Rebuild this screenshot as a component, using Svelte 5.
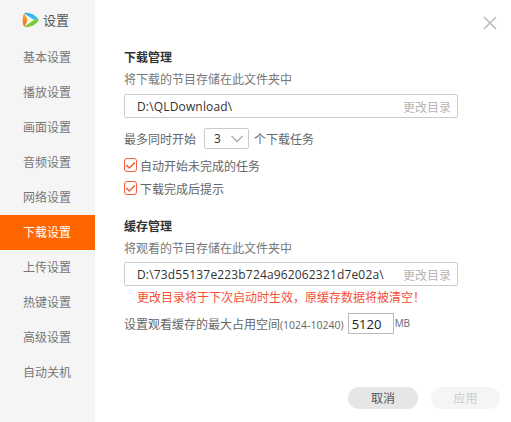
<script>
  const items = ['基本设置','播放设置','画面设置','音频设置','网络设置','下载设置','上传设置','热键设置','高级设置','自动关机'];
</script>

<div class="win">
  <aside class="side">
    <div class="brand">
      <svg class="logo" width="17" height="16" viewBox="0 0 17 16">
        <defs>
          <linearGradient id="lg" x1="0" y1="0" x2="0" y2="1"><stop offset="0" stop-color="#f7b52c"/><stop offset="1" stop-color="#f4651f"/></linearGradient>
          <linearGradient id="lb" x1="0" y1="0" x2="1" y2="0"><stop offset="0" stop-color="#2fa7ee"/><stop offset="1" stop-color="#35c6e8"/></linearGradient>
        </defs>
        <path d="M2.2 1.2 C1 3 .6 5.5.6 8 s.4 5 1.6 6.8 L6 8z" fill="url(#lg)"/>
        <path d="M2.2 1.2 C6 -.3 12 2.5 16 6.3 L12 8 L6 4z" fill="url(#lb)"/>
        <path d="M2.2 14.8 C6 16.3 12 13.5 16 9.7 Q17 8 16 6.3 L12 8 L6 12z" fill="#7ccb3a"/>
        <path d="M5.4 4.6 L12 8 L5.4 11.4z" fill="#f2f8e8"/>
      </svg>
      <span>设置</span>
    </div>
    <nav>
      {#each items as it}
        <div class="item" class:active={it === '下载设置'}>{it}</div>
      {/each}
    </nav>
  </aside>

  <main class="main">
    <button class="close" aria-label="关闭">
      <svg width="14" height="14" viewBox="0 0 14 14"><path d="M1 1 L13 13 M13 1 L1 13" stroke="#b9b9b9" stroke-width="1.5" fill="none"/></svg>
    </button>

    <section class="sec first">
      <h3>下载管理</h3>
      <p class="desc">将下载的节目存储在此文件夹中</p>
      <div class="path"><span class="val">D:\QLDownload\</span><span class="chg">更改目录</span></div>
      <div class="row rowsel">
        <span>最多同时开始</span>
        <div class="sel"><span class="num">3</span>
          <svg width="14" height="8" viewBox="0 0 14 8"><path d="M1.5 1 L7 6.5 L12.5 1" stroke="#b5b5b5" stroke-width="1.7" fill="none"/></svg>
        </div>
        <span>个下载任务</span>
      </div>
      <label class="chk c1"><span class="box"><svg width="11" height="9" viewBox="0 0 11 9"><path d="M1.2 4 L4.3 7 L9.8 1.5" stroke="#f0603a" stroke-width="1.6" fill="none"/></svg></span>自动开始未完成的任务</label>
      <label class="chk c2"><span class="box"><svg width="11" height="9" viewBox="0 0 11 9"><path d="M1.2 4 L4.3 7 L9.8 1.5" stroke="#f0603a" stroke-width="1.6" fill="none"/></svg></span>下载完成后提示</label>
    </section>

    <section class="sec second">
      <h3>缓存管理</h3>
      <p class="desc">将观看的节目存储在此文件夹中</p>
      <div class="path"><span class="val">D:\73d55137e223b724a962062321d7e02a\</span><span class="chg">更改目录</span></div>
      <p class="warn">更改目录将于下次启动时生效，原缓存数据将被清空！</p>
      <div class="row rowsize">
        <span>设置观看缓存的最大占用空间<small>(1024-10240)</small></span>
        <div class="size">5120</div>
        <small class="mb">MB</small>
      </div>
    </section>

    <div class="actions">
      <button class="btn cancel">取消</button>
      <button class="btn apply">应用</button>
    </div>
  </main>
</div>

<style>
  :global(body) { margin: 0; background: #fff; }
  .win {
    width: 511px; height: 422px; display: flex; overflow: hidden;
    font-family: "Noto Sans CJK SC", "Noto Sans", sans-serif;
    font-size: 12px; color: #666; background: #fff;
  }
  .side { width: 95px; flex: none; background: #f5f5f5; }
  .brand {
    height: 40px; display: flex; align-items: center; gap: 4px; padding-left: 22px;
    font-size: 13px; color: #555;
  }
  .brand span { position: relative; top: -1px; }
  .logo { flex: none; }
  .item { height: 35px; line-height: 34px; padding-left: 23px; color: #777; }
  .item.active { background: #ff6600; color: #fff; }
  .main { flex: 1; position: relative; padding-left: 29px; padding-right: 53px; }
  .close { position: absolute; top: 16px; right: 14px; padding: 0; border: 0; background: none; line-height: 0; }
  h3 { margin: 0; font-size: 12px; font-weight: 700; color: #333; line-height: 18px; }
  .first { padding-top: 48px; }
  .second { padding-top: 21px; }
  .desc { margin: 4px 0 0; line-height: 18px; color: #777; }
  .path {
    box-sizing: border-box; height: 24px; margin-top: 5px; border: 1px solid #ccc; border-radius: 2px;
    display: flex; align-items: center; justify-content: space-between; padding: 0 6px 0 12px;
  }
  .first .path { margin-top: 6px; }
  .val { font-family: "Open Sans", sans-serif; font-size: 12px; letter-spacing: .16px; color: #333; white-space: nowrap; }
  .chg { color: #b5b5b5; white-space: nowrap; }
  .row { display: flex; align-items: center; }
  .rowsel { margin-top: 10px; height: 21px; }
  .sel {
    box-sizing: border-box; width: 45px; height: 21px; margin: 0 5px 0 8px; border: 1px solid #ccc; border-radius: 2px;
    display: flex; align-items: center; justify-content: space-between; padding: 0 4px 0 9px;
  }
  .num { font-family: "Open Sans", sans-serif; color: #333; }
  .chk { display: flex; align-items: center; gap: 3px; height: 16px; }
  .c1 { margin-top: 8px; }
  .c2 { margin-top: 7px; }
  .box {
    box-sizing: border-box; width: 13px; height: 14px; border: 1px solid #f0603a; border-radius: 3px;
    display: flex; align-items: center; justify-content: center;
  }
  .warn { margin: 2px 0 0; padding-left: 13px; line-height: 18px; color: #f5503c; white-space: nowrap; }
  small { font-family: "Open Sans", sans-serif; font-size: 10.5px; }
  .rowsize { margin-top: 6px; height: 22px; }
  .size {
    box-sizing: border-box; width: 46px; height: 21px; margin: 0 1px 0 4px; border: 1px solid #bbb;
    font-family: "Open Sans", sans-serif; font-size: 13px; color: #222; line-height: 20px; padding-left: 3px;
  }
  .mb { color: #667; font-size: 10px; }
  .actions { position: absolute; left: 253px; top: 387px; display: flex; gap: 13px; }
  .btn { width: 70px; height: 22px; border: 0; border-radius: 11px; padding: 0; font: inherit; line-height: 22px; }
  .cancel { background: #e6e6e6; color: #555; }
  .apply { background: #f5f5f5; color: #ccc; width: 69px; }
</style>
